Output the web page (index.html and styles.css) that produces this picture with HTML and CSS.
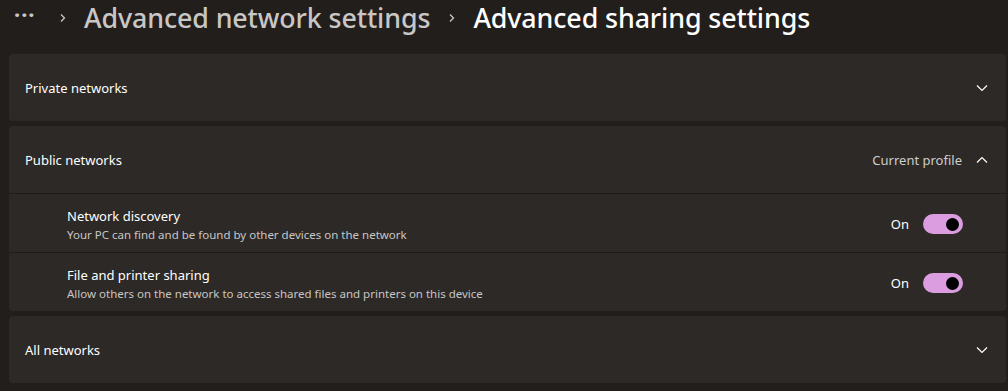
FILE: index.html
```html
<!DOCTYPE html>
<html lang="en">
<head>
  <meta charset="UTF-8">
  <title>Advanced sharing settings</title>
  <link rel="stylesheet" href="styles.css">
</head>
<body>
  <div class="breadcrumb">
    <span class="more">&middot;&middot;&middot;</span>
    <svg class="crumb-sep" width="8" height="10" viewBox="0 0 8 10"><path d="M2 1.5 L5.5 5 L2 8.5" fill="none" stroke="#c9c7c6" stroke-width="1.3"/></svg>
    <span class="crumb">Advanced network settings</span>
    <svg class="crumb-sep" width="8" height="10" viewBox="0 0 8 10"><path d="M2 1.5 L5.5 5 L2 8.5" fill="none" stroke="#c9c7c6" stroke-width="1.3"/></svg>
    <span class="crumb current">Advanced sharing settings</span>
  </div>

  <div class="list">
    <div class="card">
      <div class="card-head">
        <span class="card-title">Private networks</span>
        <svg class="chev" width="12" height="8" viewBox="0 0 12 8"><path d="M1 1.5 L6 6.5 L11 1.5" fill="none" stroke="#fff" stroke-width="1.2"/></svg>
      </div>
    </div>

    <div class="card">
      <div class="card-head">
        <span class="card-title">Public networks</span>
        <span class="card-extra">Current profile</span>
        <svg class="chev" width="12" height="8" viewBox="0 0 12 8"><path d="M1 6.5 L6 1.5 L11 6.5" fill="none" stroke="#fff" stroke-width="1.2"/></svg>
      </div>
      <div class="sub-row">
        <div class="sub-text">
          <div class="sub-title">Network discovery</div>
          <div class="sub-desc">Your PC can find and be found by other devices on the network</div>
        </div>
        <span class="state">On</span>
        <span class="toggle"><span class="knob"></span></span>
      </div>
      <div class="sub-row">
        <div class="sub-text">
          <div class="sub-title">File and printer sharing</div>
          <div class="sub-desc">Allow others on the network to access shared files and printers on this device</div>
        </div>
        <span class="state">On</span>
        <span class="toggle"><span class="knob"></span></span>
      </div>
    </div>

    <div class="card">
      <div class="card-head">
        <span class="card-title">All networks</span>
        <svg class="chev" width="12" height="8" viewBox="0 0 12 8"><path d="M1 1.5 L6 6.5 L11 1.5" fill="none" stroke="#fff" stroke-width="1.2"/></svg>
      </div>
    </div>
  </div>
</body>
</html>
```

FILE: styles.css
```css
body {
  margin: 0;
  background-color: #221e1c;
  color: #fff;
  font-family: "Noto Sans", "Open Sans", sans-serif;
}

.breadcrumb {
  display: flex;
  align-items: center;
  height: 34px;
  padding-left: 14px;
  margin-bottom: 20px;
}

.more {
  font-size: 22px;
  font-weight: 700;
  color: #c9c7c6;
  letter-spacing: 1px;
  line-height: 20px;
  margin-top: -6px;
  width: 27px;
}

.crumb-sep {
  margin: 2px 17px 0 18px;
}

.crumb {
  font-size: 26.8px;
  font-weight: 500;
  color: #c9c7c6;
  letter-spacing: -0.1px;
}

.crumb.current {
  color: #fff;
}

.list {
  display: flex;
  flex-direction: column;
  gap: 5px;
  padding: 0 2px 0 9px;
}

.card {
  background-color: #2d2927;
  border-radius: 4px;
}

.card-head {
  display: flex;
  align-items: center;
  height: 67px;
  padding: 0 18px 0 16px;
}

.card-title {
  flex: 1;
  font-size: 13px;
}

.card-extra {
  font-size: 13px;
  color: #cfcdcc;
  margin-right: 14px;
}

.chev {
  display: block;
}

.sub-row {
  display: flex;
  align-items: center;
  height: 58px;
  border-top: 1px solid #1f1b1a;
  padding: 0 43px 0 58px;
}

.sub-text {
  flex: 1;
  padding-top: 3px;
}

.sub-title {
  font-size: 13px;
  line-height: 19px;
}

.sub-desc {
  font-size: 11.5px;
  line-height: 17px;
  color: #c8c6c5;
}

.state {
  font-size: 13px;
  margin-right: 14px;
  padding-top: 2px;
}

.toggle {
  display: flex;
  align-items: center;
  justify-content: flex-end;
  width: 40px;
  height: 20px;
  border-radius: 10px;
  background-color: #db9de0;
  box-sizing: border-box;
  padding-right: 4px;
  margin-top: 2px;
}

.knob {
  width: 13px;
  height: 13px;
  border-radius: 50%;
  background-color: #000;
}
```
